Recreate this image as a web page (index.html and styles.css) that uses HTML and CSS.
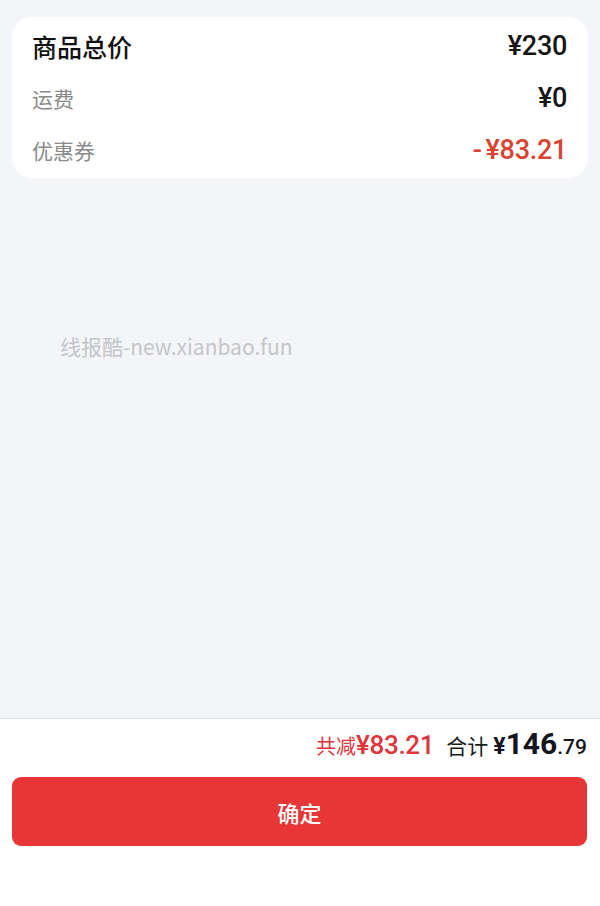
FILE: index.html
```html
<!DOCTYPE html>
<html lang="zh-CN">
<head>
    <meta charset="UTF-8">
    <meta name="viewport" content="width=device-width, initial-scale=1.0">
    <title>订单确认</title>
    <link rel="stylesheet" href="styles.css">
</head>
<body>
    <div class="page">
        <div class="main">
            <div class="price-card">
                <div class="price-row">
                    <span class="row-title">商品总价</span>
                    <span class="price">¥230</span>
                </div>
                <div class="price-row">
                    <span class="row-label">运费</span>
                    <span class="price">¥0</span>
                </div>
                <div class="price-row">
                    <span class="row-label">优惠券</span>
                    <span class="price discount"><span class="minus">-</span>¥83.21</span>
                </div>
            </div>

            <div class="watermark">线报酷-new.xianbao.fun</div>
        </div>

        <div class="footer">
            <div class="summary">
                <span class="saved">共减<span class="saved-num">¥83.21</span></span>
                <span class="total-label">合计</span>
                <span class="total-yen">¥</span><span class="total-int">146</span><span class="total-dec">.79</span>
            </div>
            <button class="confirm-btn" type="button">确定</button>
        </div>
    </div>
</body>
</html>
```

FILE: styles.css
```css
* {
    box-sizing: border-box;
}
body {
    margin: 0;
    padding: 0;
    background-color: #f4f5f9;
    font-family: "Noto Sans CJK SC", "Noto Sans", sans-serif;
    color: #111;
}
.page {
    display: flex;
    flex-direction: column;
    height: 906px;
}
.main {
    flex: 1;
    padding: 17px 12px 0;
}
.price-card {
    background: #fff;
    border-radius: 20px;
    padding: 3px 21px 2px 20px;
}
.price-row {
    display: flex;
    justify-content: space-between;
    align-items: center;
    height: 52px;
}
.row-title {
    font-size: 25px;
    font-weight: 500;
    color: #111;
}
.row-label {
    font-size: 21px;
    color: #8a8a8a;
}
.price {
    font-family: Roboto, "Noto Sans CJK SC", sans-serif;
    font-size: 27px;
    font-weight: 500;
    color: #151515;
    letter-spacing: -0.3px;
}
.price.discount {
    color: #d9432f;
}
.minus {
    margin-right: 4px;
}
.watermark {
    margin-top: 153px;
    padding-left: 48px;
    line-height: 30px;
    font-size: 21px;
    color: #c4c5ca;
}
.footer {
    height: 188px;
    background: #fff;
    border-top: 1px solid #e2e3e7;
    padding: 7px 13px 0 12px;
}
.summary {
    display: flex;
    justify-content: flex-end;
    align-items: baseline;
    height: 38px;
}
.saved {
    font-size: 20px;
    color: #e0353b;
    margin-right: 12px;
}
.saved-num {
    font-family: Roboto, sans-serif;
    font-size: 26px;
    font-weight: 500;
    letter-spacing: -0.3px;
}
.total-label {
    font-size: 21px;
    color: #1a1a1a;
    margin-right: 5px;
}
.total-yen {
    font-family: Roboto, sans-serif;
    font-size: 23px;
    font-weight: 700;
    color: #15151f;
}
.total-int {
    font-family: Roboto, sans-serif;
    font-size: 30px;
    font-weight: 700;
    color: #15151f;
}
.total-dec {
    font-family: Roboto, sans-serif;
    font-size: 21px;
    font-weight: 500;
    color: #15151f;
}
.confirm-btn {
    display: block;
    width: 100%;
    height: 69px;
    margin-top: 13px;
    border: none;
    border-radius: 9px;
    background-color: #e83535;
    color: #fff;
    font-family: "Noto Sans CJK SC", sans-serif;
    font-size: 22px;
    font-weight: 500;
    cursor: pointer;
}
```
